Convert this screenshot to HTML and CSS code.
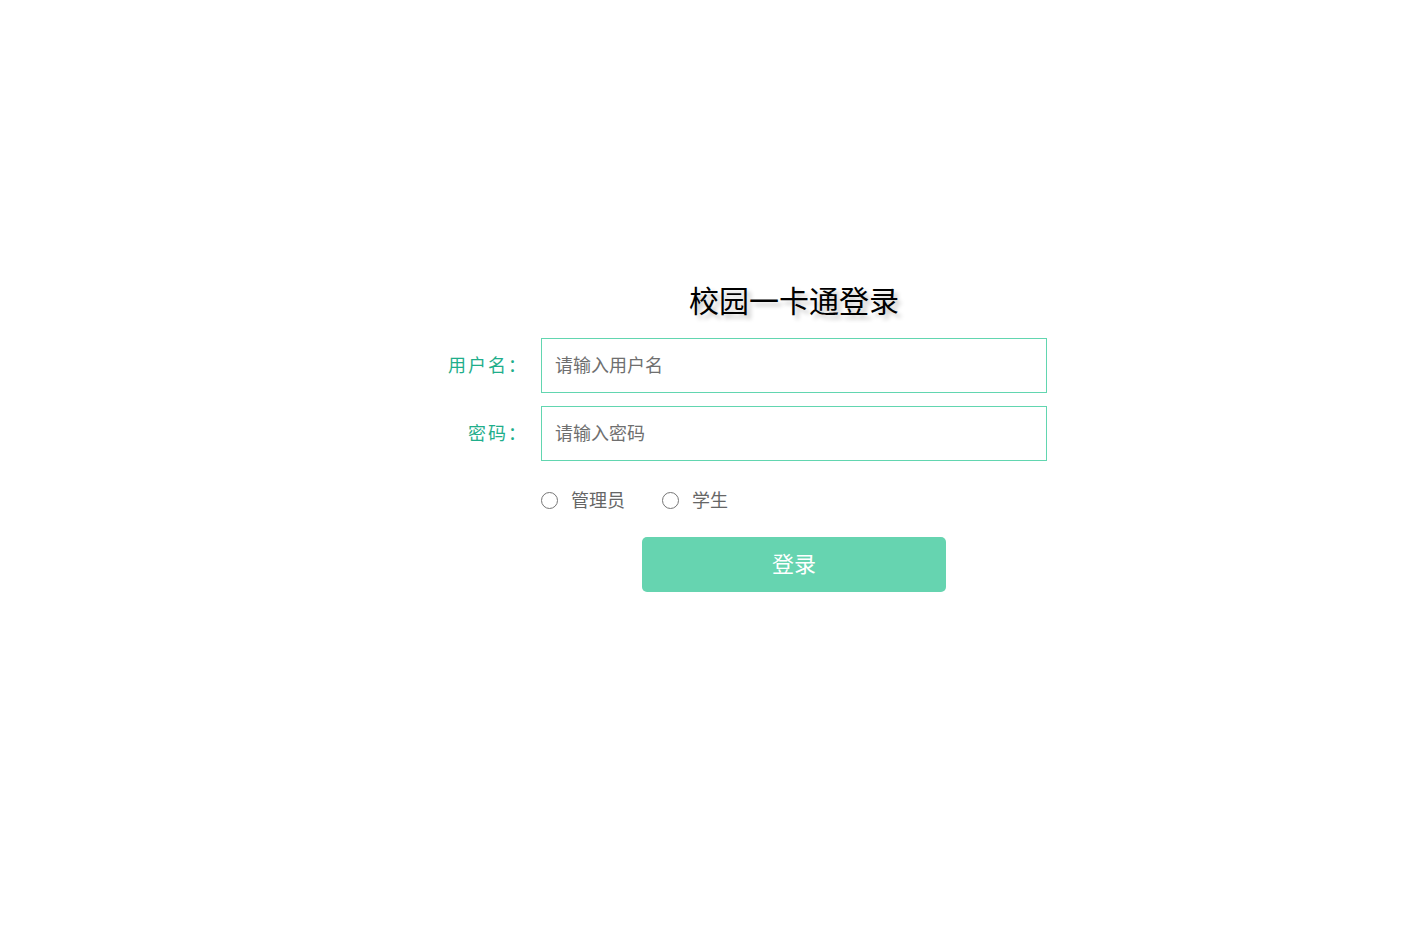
FILE: index.html
```html
<!DOCTYPE html>
<html lang="zh-CN">
<head>
<meta charset="utf-8">
<title>校园一卡通登录</title>
<link rel="stylesheet" href="styles.css">
</head>
<body>
<div class="login">
  <div class="row">
    <div class="label"></div>
    <h1 class="title">校园一卡通登录</h1>
  </div>
  <div class="row field">
    <label class="label" for="u">用户名：</label>
    <input class="input" id="u" type="text" placeholder="请输入用户名">
  </div>
  <div class="row field">
    <label class="label" for="p">密码：</label>
    <input class="input" id="p" type="password" placeholder="请输入密码">
  </div>
  <div class="row roles">
    <div class="label"></div>
    <div class="radios">
      <label class="radio"><span class="dot"></span><span class="rtext">管理员</span></label>
      <label class="radio"><span class="dot"></span><span class="rtext">学生</span></label>
    </div>
  </div>
  <div class="row">
    <div class="label"></div>
    <div class="btnwrap"><button class="btn" type="button">登录</button></div>
  </div>
</div>
</body>
</html>
```
FILE: styles.css
```css
html, body {
  margin: 0;
  padding: 0;
  background: #fff;
}
body {
  font-family: "Noto Sans CJK SC", "Noto Sans", sans-serif;
  padding-top: 281px;
}
.login {
  width: 680px;
  margin: 0 auto;
  display: flex;
  flex-direction: column;
}
.row {
  display: flex;
  align-items: center;
}
.label {
  width: 174px;
  flex: none;
  box-sizing: border-box;
  padding: 0 13px 3px 0;
  text-align: right;
  font-size: 18px;
  letter-spacing: 2px;
  color: #1fae8b;
  line-height: 24px;
}
.title {
  flex: 1;
  margin: 0;
  padding-bottom: 2px;
  text-align: center;
  font-size: 30px;
  font-weight: normal;
  line-height: 36px;
  color: #000;
  text-shadow: 4px 4px 4px #c8c8c8;
}
.field {
  margin-top: 19px;
}
.field + .field {
  margin-top: 13px;
}
.input {
  flex: 1;
  height: 55px;
  box-sizing: border-box;
  border: 1px solid #62d6b0;
  border-radius: 0;
  padding: 0 13px 4px;
  font-family: inherit;
  font-size: 18px;
  color: #333;
  outline: none;
  margin: 0;
}
.input::placeholder {
  color: #6f6f6f;
}
.roles {
  margin-top: 26px;
  height: 26px;
}
.radios {
  display: flex;
  align-items: center;
  gap: 37px;
}
.radio {
  display: flex;
  align-items: center;
  gap: 13px;
  font-size: 18px;
  color: #666;
  line-height: 24px;
}
.rtext {
  padding-bottom: 2px;
}
.dot {
  width: 17px;
  height: 17px;
  box-sizing: border-box;
  border: 1px solid #767676;
  border-radius: 50%;
  background: #fff;
}
.btnwrap {
  flex: 1;
  display: flex;
  justify-content: center;
  margin-top: 24px;
}
.btn {
  width: 304px;
  height: 55px;
  border: none;
  border-radius: 5px;
  background: #66d4b0;
  color: #fff;
  font-family: inherit;
  font-size: 22px;
  padding: 0 0 6px;
}
```
